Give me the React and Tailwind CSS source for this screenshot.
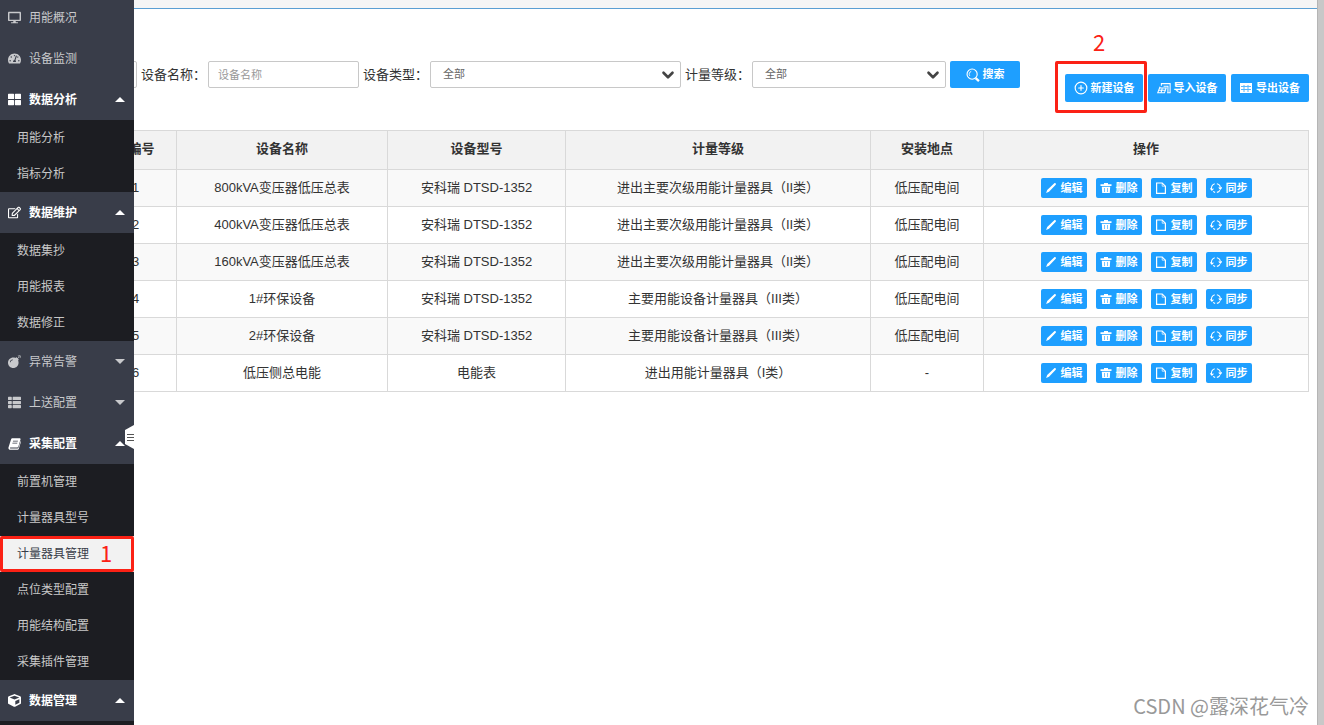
import { FaDesktop, FaTachometerAlt, FaThLarge, FaRegEdit, FaBomb, FaThList, FaCube } from 'react-icons/fa';
import { ChevronDown, CirclePlus } from 'lucide-react';

function BookIcon({ className }) {
    return (
        <svg viewBox="0 0 16 16" fill="currentColor" className={className}>
            <path d="M5.6 1.500h8.600c.9 0 1.500.8 1.200 1.700l-2.600 8.600c-.2.7-.8 1.200-1.500 1.200H3.200c-.5 0-.9.3-.7.8.1.3.4.4.8.4h8.600c.4 0 .8-.3.9-.6L15.600 5c.4.3.5.8.3 1.300l-2.600 8.200c-.2.8-1 1.300-1.800 1.300H2.700C1.300 15.800.2 14.500.6 13L3.700 3c.3-.9 1-1.500 1.900-1.500zM6.300 4.500l-.3 1h6l.3-1zM5.600 7l-.3 1h6l.3-1z" />
        </svg>
    );
}

function SearchIcon({ className }) {
    return (
        <svg viewBox="0 0 16 16" fill="none" stroke="currentColor" className={className}>
            <circle cx="7" cy="7" r="5.800" strokeWidth="1.300" />
            <path d="M4.300 9A3.400 3.400 0 0 1 6 3.800" strokeWidth="1" />
            <path d="M11 11.500l3.800 3.500" strokeWidth="2.600" />
        </svg>
    );
}

function ImportIcon({ className }) {
    return (
        <svg viewBox="0 0 16 14" fill="none" stroke="currentColor" strokeWidth="1.200" className={className}>
            <path d="M5 4.500V2h10v10.500h-3.500" />
            <path d="M7.500 5h5v7" />
            <path d="M3.500 5.500l-2.700 7h7.700l2-5.500H3" />
            <path d="M2.300 9.500h7M4.500 12.500l1.500-5" />
        </svg>
    );
}

function GridIcon() {
    return (
        <svg viewBox="0 0 12 10" className="mr-px h-[10px] w-3">
            <rect width="12" height="10" fill="currentColor" />
            <path d="M1 3.500h10M1 6.500h10M4 2v7M8 2v7" stroke="#1e9fff" strokeWidth="1" opacity=".75" />
        </svg>
    );
}

function PencilIcon({ className }) {
    return (
        <svg viewBox="0 0 12 12" fill="currentColor" className={className}>
            <path d="M9.300 1.300c.4-.4 1-.4 1.400.1.400.4.400 1 0 1.400L4 9.700l-2.900 1.200L2.200 8z" />
        </svg>
    );
}

function TrashIcon({ className }) {
    return (
        <svg viewBox="0 0 12 12" fill="currentColor" className={className}>
            <path d="M4 1h4v1.200h3.500v1.900H.5V2.200H4z" />
            <path fillRule="evenodd" d="M1.800 4.800h8.400L9.800 11H2.200zM4.200 6v4h.6V6zM7.200 6v4h.6V6z" />
        </svg>
    );
}

function PageIcon({ className }) {
    return (
        <svg viewBox="0 0 12 12" fill="none" stroke="currentColor" strokeWidth="1.200" className={className}>
            <path d="M1.600 1h5.600l3.200 3.200V11.400H1.600z" />
            <path d="M7.200 1v3.200h3.200" strokeWidth=".7" />
        </svg>
    );
}

function SyncIcon({ className }) {
    return (
        <svg viewBox="0 0 14 14" fill="none" stroke="currentColor" strokeWidth="1.200" className={className}>
            <path d="M2.100 9A5.200 5.200 0 0 1 5.500 2" />
            <path d="M8 1.900A5.200 5.200 0 0 1 12 7.500" />
            <path d="M11.600 9.500A5.200 5.200 0 0 1 8 12.100" />
            <path d="M6 12.100a5.200 5.200 0 0 1-2.300-1.100" />
            <path d="M.4 7.500l1.800 2 1.800-1.700M10.200 6.300l1.800 2 1.700-2" />
        </svg>
    );
}

const menu = [
    { title: '用能概况', icon: FaDesktop },
    { title: '设备监测', icon: FaTachometerAlt },
    { title: '数据分析', icon: FaThLarge, open: true, children: ['用能分析', '指标分析'] },
    { title: '数据维护', icon: FaRegEdit, open: true, children: ['数据集抄', '用能报表', '数据修正'] },
    { title: '异常告警', icon: FaBomb, children: [] },
    { title: '上送配置', icon: FaThList, children: [] },
    {
        title: '采集配置',
        icon: BookIcon,
        open: true,
        children: ['前置机管理', '计量器具型号', '计量器具管理', '点位类型配置', '用能结构配置', '采集插件管理'],
    },
    { title: '数据管理', icon: FaCube, open: true, children: [''] },
];

const current = '计量器具管理';

const devices = [
    { id: 1, name: '800kVA变压器低压总表', model: '安科瑞 DTSD-1352', level: '进出主要次级用能计量器具（II类）', place: '低压配电间' },
    { id: 2, name: '400kVA变压器低压总表', model: '安科瑞 DTSD-1352', level: '进出主要次级用能计量器具（II类）', place: '低压配电间' },
    { id: 3, name: '160kVA变压器低压总表', model: '安科瑞 DTSD-1352', level: '进出主要次级用能计量器具（II类）', place: '低压配电间' },
    { id: 4, name: '1#环保设备', model: '安科瑞 DTSD-1352', level: '主要用能设备计量器具（III类）', place: '低压配电间' },
    { id: 5, name: '2#环保设备', model: '安科瑞 DTSD-1352', level: '主要用能设备计量器具（III类）', place: '低压配电间' },
    { id: 6, name: '低压侧总电能', model: '电能表', level: '进出用能计量器具（I类）', place: '-' },
];

const actions = [
    { label: '编辑', icon: PencilIcon },
    { label: '删除', icon: TrashIcon },
    { label: '复制', icon: PageIcon },
    { label: '同步', icon: SyncIcon },
];

function Sidebar() {
    return (
        <aside className="relative w-[134px] shrink-0 bg-[#393d49] text-xs">
            <nav className="-mt-[3px]">
                {menu.map(({ title, icon: Icon, open, children }) => (
                    <div key={title}>
                        <a
                            href="#"
                            className={`flex h-[41px] items-center pl-2 pr-[9px] ${open ? 'font-bold text-white' : 'text-[#c8c9cc]'}`}
                        >
                            <Icon className="mr-2 h-[13px] w-[13px]" />
                            {title}
                            {children && (
                                <svg viewBox="0 0 10 5" fill="currentColor" className="ml-auto h-[5px] w-[10px]">
                                    <path d={open ? 'M0 5L5 0l5 5z' : 'M0 0l5 5 5-5z'} />
                                </svg>
                            )}
                        </a>
                        {open && (
                            <ul className="bg-[#1c1d22]">
                                {children.map((item) => (
                                    <li key={item} className="h-9">
                                        {item === current ? (
                                            <a href="#" className="relative flex h-full items-center bg-[#f2f2f2] pl-[17px] text-[#393d49]">
                                                {item}
                                                <span className="absolute inset-0 flex items-center rounded-xs border-3 border-[#fb2115] pb-1 pl-[97px] text-[22px] font-normal leading-none text-[#fb2115] font-['Noto_Sans_CJK_SC',sans-serif]">
                                                    1
                                                </span>
                                            </a>
                                        ) : (
                                            <a href="#" className="flex h-full items-center pl-[17px] text-[#c8c8c8]">{item}</a>
                                        )}
                                    </li>
                                ))}
                            </ul>
                        )}
                    </div>
                ))}
            </nav>

            {/* Collapse handle */}
            <button type="button" aria-label="收起菜单" className="absolute right-0 top-[425px] h-6 w-[9px]">
                <svg viewBox="0 0 9 24" className="h-6 w-[9px]">
                    <path d="M9 0L0 5v14l9 5z" fill="#fff" />
                    <path d="M2 9.500h7M2 12.500h7M2 15.500h7" stroke="#555" strokeWidth="1" />
                </svg>
            </button>
        </aside>
    );
}

function SelectField({ id, label, className }) {
    return (
        <div className="flex items-center">
            <label htmlFor={id} className="w-[67px] whitespace-nowrap">{label}</label>
            <div className={`relative ${className}`}>
                <select id={id} className="h-[27px] w-full appearance-none rounded-xs border border-[#c8c8c8] bg-white pl-3 text-[11px] text-[#666]">
                    <option>全部</option>
                </select>
                <ChevronDown strokeWidth={3.5} className="pointer-events-none absolute right-1 top-[5px] h-[18px] w-[18px] text-[#444]" />
            </div>
        </div>
    );
}

function ToolButton({ icon: Icon, children }) {
    return (
        <button type="button" className="flex h-7 w-[78px] items-center justify-center gap-[3px] rounded-xs bg-[#1e9fff] text-[11px] font-bold text-white">
            <Icon className="h-[14px] w-[14px]" />
            {children}
        </button>
    );
}

export default function App() {
    return (
        <div className="flex h-screen overflow-hidden bg-white text-[13px] text-[#333] font-['Liberation_Sans','Noto_Sans_CJK_SC',sans-serif]">
            <Sidebar />

            <main className="relative min-w-0 flex-1 overflow-hidden">
                <div className="h-[9px] border-b border-[#5b9fd3] bg-[#f5f5f5]" />

                {/* Filters */}
                <div className="flex items-start justify-between pr-2 pt-[52px]">
                    <form className="flex items-center gap-1">
                        <input type="text" aria-label="编号" className="-ml-[37px] h-[27px] w-10 rounded-xs border border-[#c8c8c8]" />
                        <div className="flex items-center">
                            <label htmlFor="name" className="w-[67px] whitespace-nowrap">设备名称：</label>
                            <input
                                id="name"
                                type="text"
                                placeholder="设备名称"
                                className="h-[27px] w-[151px] rounded-xs border border-[#c8c8c8] px-[9px] text-[11px] placeholder:text-[#999]"
                            />
                        </div>
                        <SelectField id="type" label="设备类型：" className="w-[251px]" />
                        <SelectField id="level" label="计量等级：" className="w-[194px]" />
                        <button type="button" className="flex h-[27px] w-[70px] items-center justify-center gap-[3px] rounded-xs bg-[#1e9fff] text-[11px] font-bold text-white">
                            <SearchIcon className="h-[14px] w-[14px]" />
                            搜索
                        </button>
                    </form>

                    <div className="mt-[13px] flex gap-[5px]">
                        <div className="relative">
                            <ToolButton icon={CirclePlus}>新建设备</ToolButton>
                            <span className="pointer-events-none absolute -left-[10px] -right-1 -top-[13px] h-[52px] rounded-xs border-3 border-[#fb2115]" />
                            <span className="absolute -top-11 left-7 text-[22px] leading-none text-[#fb2115] font-['Noto_Sans_CJK_SC',sans-serif]">2</span>
                        </div>
                        <ToolButton icon={ImportIcon}>导入设备</ToolButton>
                        <ToolButton icon={GridIcon}>导出设备</ToolButton>
                    </div>
                </div>

                {/* Devices Table */}
                <div className="-ml-7 mt-7 pr-2">
                    <table className="w-full table-fixed border-collapse text-center">
                        <colgroup>
                            <col className="w-[70px]" />
                            <col className="w-[211px]" />
                            <col className="w-[178px]" />
                            <col className="w-[305px]" />
                            <col className="w-[113px]" />
                            <col />
                        </colgroup>
                        <thead className="bg-[#f2f2f2]">
                            <tr className="h-[39px]">
                                {['编号', '设备名称', '设备型号', '计量等级', '安装地点', '操作'].map((title) => (
                                    <th key={title} className="border border-[#d9d9d9] pb-0.5 font-bold">{title}</th>
                                ))}
                            </tr>
                        </thead>
                        <tbody>
                            {devices.map((device) => (
                                <tr key={device.id} className="h-[37px] odd:bg-[#f9f9f9]">
                                    <td className="border border-[#d9d9d9] pr-3">{device.id}</td>
                                    <td className="border border-[#d9d9d9]">{device.name}</td>
                                    <td className="border border-[#d9d9d9]">{device.model}</td>
                                    <td className="border border-[#d9d9d9]">{device.level}</td>
                                    <td className="border border-[#d9d9d9]">{device.place}</td>
                                    <td className="border border-[#d9d9d9]">
                                        <div className="flex justify-center gap-[9px]">
                                            {actions.map(({ label, icon: Icon }) => (
                                                <button
                                                    key={label}
                                                    type="button"
                                                    className="flex h-5 w-[46px] items-center justify-center gap-1 rounded-xs bg-[#1e9fff] text-[11px] font-bold text-white"
                                                >
                                                    <Icon className="h-3 w-3" />
                                                    {label}
                                                </button>
                                            ))}
                                        </div>
                                    </td>
                                </tr>
                            ))}
                        </tbody>
                    </table>
                </div>

                <p className="absolute bottom-1 right-2 text-[20px] leading-[30px] text-[#999] font-['Noto_Sans_CJK_SC',sans-serif]">CSDN @露深花气冷</p>
            </main>

            {/* Scrollbar track */}
            <div className="w-[7px] shrink-0 border-l border-[#b5b5b5] bg-[#c8c8c8]" />
        </div>
    );
}
